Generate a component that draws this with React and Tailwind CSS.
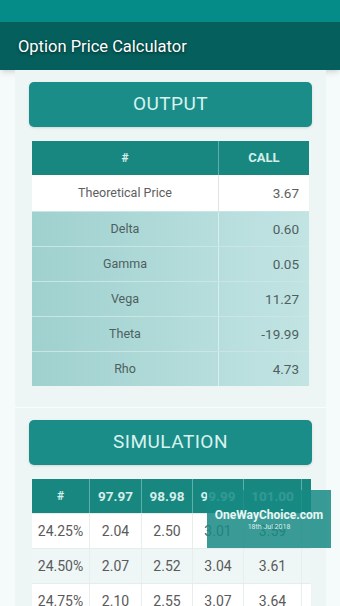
const outputRows = [
  ["Delta", "0.60"],
  ["Gamma", "0.05"],
  ["Vega", "11.27"],
  ["Theta", "-19.99"],
  ["Rho", "4.73"],
];

const simHeader = ["#", "97.97", "98.98", "99.99", "101.00"];
const simRows = [
  ["24.25%", "2.04", "2.50", "3.01", "3.59"],
  ["24.50%", "2.07", "2.52", "3.04", "3.61"],
  ["24.75%", "2.10", "2.55", "3.07", "3.64"],
];
const simWidths = ["w-[58px]", "w-[52px]", "w-[51px]", "w-[51px]", "w-[58px]"];

const SectionButton = ({ label }) => (
  <div className="h-[45px] rounded-[5px] bg-[#1b8d88] flex items-center justify-center shadow-sm">
    <span className="text-[19px] text-[#d8f3ef] tracking-wide">{label}</span>
  </div>
);

export default function App() {
  return (
    <div
      className="w-[340px] h-[606px] overflow-hidden bg-[#f5fafa] relative"
      style={{ fontFamily: "Roboto, 'Liberation Sans', sans-serif" }}
    >
      <div className="h-[22px] bg-[#058b88]" />
      <div className="h-[48px] bg-[#055f5c] flex items-center pl-[18px] pt-[2px] shadow-md">
        <span className="text-white text-[16.5px] [text-shadow:0_1px_3px_rgba(0,0,0,0.6)]">
          Option Price Calculator
        </span>
      </div>

      <div className="ml-[15px] w-[311px] bg-[#edf5f5] px-[14px] pt-[12px] pb-[21px]">
        <SectionButton label="OUTPUT" />
        <div className="mt-[14px] mx-[3px]">
          <div className="flex h-[34px] bg-[#18877f] text-[#d5eeea] font-bold">
            <div className="w-[187px] flex items-center justify-center text-[12px] border-r border-[#5fb0aa]">
              #
            </div>
            <div className="flex-1 flex items-center justify-center text-[13px]">
              CALL
            </div>
          </div>
          <div className="flex h-[36px] bg-white text-[#5e5e5e] text-[12.5px]">
            <div className="w-[187px] flex items-center justify-center border-r border-[#e2e2e2]">
              Theoretical Price
            </div>
            <div className="flex-1 flex items-center justify-end pr-[10px] text-[13.5px]">3.67</div>
          </div>
          {outputRows.map(([k, v]) => (
            <div
              key={k}
              className="flex h-[35px] bg-gradient-to-r from-[#9fd1cf] to-[#c2e4e3] text-[#4f5f5f] text-[12.5px] border-t border-[#c9e6e5]"
            >
              <div className="w-[187px] flex items-center justify-center border-r border-[#d6eeed]">
                {k}
              </div>
              <div className="flex-1 flex items-center justify-end pr-[10px] text-[13.5px]">{v}</div>
            </div>
          ))}
        </div>
      </div>

      <div className="ml-[15px] w-[311px] bg-[#edf5f5] px-[14px] pt-[12px] border-t border-[#f8fcfc] h-[200px]">
        <SectionButton label="SIMULATION" />
        <div className="mt-[14px] mx-[3px] w-[279px]">
          <div className="flex h-[34px] bg-[#18877f] text-[#d5eeea] font-bold text-[13.5px]">
            {simHeader.map((h, i) => (
              <div
                key={h}
                className={`${simWidths[i]} flex items-center justify-center border-r border-[#5fb0aa] ${i === 0 ? "text-[12px]" : ""}`}
              >
                {h}
              </div>
            ))}
            <div className="flex-1" />
          </div>
          {simRows.map((r, ri) => (
            <div
              key={r[0]}
              className={`flex h-[35px] text-[#5a5a5a] text-[14px] border-t border-[#e3eded] ${ri === 1 ? "bg-[#eef6f6]" : "bg-white"}`}
            >
              {r.map((c, i) => (
                <div
                  key={i}
                  className={`${simWidths[i]} flex items-center justify-center border-r border-[#e6eeee]`}
                >
                  {c}
                </div>
              ))}
              <div className="flex-1" />
            </div>
          ))}
        </div>
      </div>

      <div className="absolute left-[207px] top-[490px] w-[124px] h-[58px] bg-[#188a84]/85 flex flex-col items-center pt-[19px]">
        <span className="text-[#e8f7f5] text-[12px] font-bold leading-none">
          OneWayChoice.com
        </span>
        <span className="text-[#d8eeec] text-[7px] mt-[3px] leading-none">
          18th Jul 2018
        </span>
      </div>
    </div>
  );
}
